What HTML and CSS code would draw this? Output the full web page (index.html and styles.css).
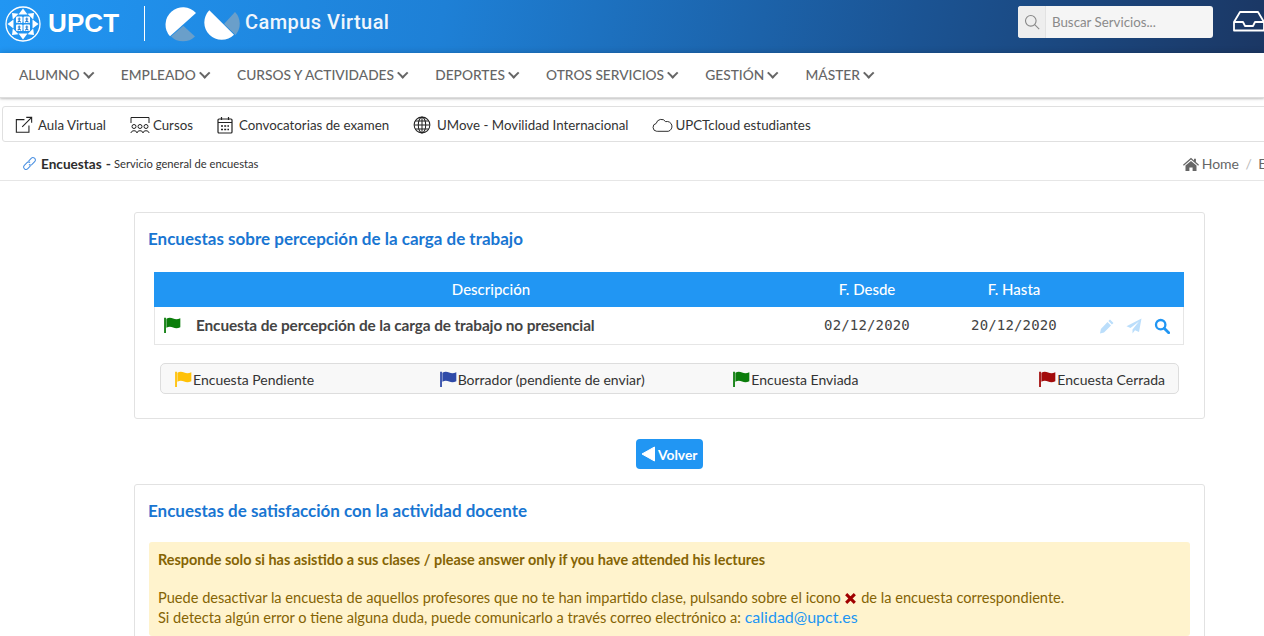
FILE: index.html
```html
<!DOCTYPE html>
<html lang="es">
<head>
<meta charset="utf-8">
<title>Campus Virtual UPCT</title>
<link rel="stylesheet" href="styles.css">
</head>
<body>
<svg class="defs" width="0" height="0" aria-hidden="true">
  <symbol id="flag" viewBox="0 0 16 16"><path d="M1 1.500h1.600V15H1z"/><path d="M3 2.400C5 1.200 7 1.300 9 2.200c2 .9 4 .9 6.400-.2v8c-2.400 1.100-4.400 1.100-6.400.2-2-.9-4-1-6 .2z"/></symbol>
</svg>
<header class="topbar">
  <div class="brand">
    <svg class="seal" viewBox="0 0 36 36" fill="none">
      <circle cx="18" cy="18" r="17" stroke="#fff" stroke-width="1.300"/>
      <g fill="#fff">
        <path d="M18 2.500l4.500 6h-9z"/><path d="M18 33.500l4.500-6h-9z"/><path d="M2.500 18l6-4.500v9z"/><path d="M33.500 18l-6-4.500v9z"/>
        <path d="M7 7l6.500.8-5.700 5.700z"/><path d="M29 7l-6.500.8 5.700 5.700z"/><path d="M7 29l6.500-.8-5.700-5.700z"/><path d="M29 29l-6.500-.8 5.700-5.700z"/>
        <rect x="11" y="10.500" width="6.500" height="6.500" rx="1"/><rect x="18.500" y="10.500" width="6.500" height="6.500" rx="1"/><rect x="11" y="18.500" width="6.500" height="6.500" rx="1"/><rect x="18.500" y="18.500" width="6.500" height="6.500" rx="1"/>
      </g>
      <g stroke="#2a7fd0" stroke-width="1.100">
        <path d="M14.200 11.500v3l-1.500 1.800M14.200 14.500l1.600 1.800M12.800 13h2.800"/>
        <path d="M21.800 11.500v3l-1.500 1.800M21.800 14.500l1.600 1.800M20.400 13h2.800"/>
        <path d="M14.200 19.500v3l-1.500 1.800M14.200 22.500l1.600 1.800M12.800 21h2.800"/>
        <path d="M21.800 19.500v3l-1.500 1.800M21.800 22.500l1.600 1.800M20.400 21h2.800"/>
      </g>
    </svg>
    <span class="upct">UPCT</span>
    <span class="divider"></span>
    <svg class="pie" viewBox="0 0 85 42">
      <path fill="#fff" d="M36 10A17.300 17.300 0 1 0 10 33.300z"/>
      <path fill="#6a9fca" d="M11 33.500L23.300 22.700 35 33.500A17.300 17.300 0 0 1 11 33.500z"/>
      <path fill="#fff" d="M49.300 7.300A17 17 0 1 0 74 31.700z"/>
      <path fill="#6a9fca" d="M64 21L75 9a17 17 0 0 1 .500 23z"/>
    </svg>
    <span class="campus">Campus Virtual</span>
  </div>
  <div class="tools">
    <div class="search">
      <span class="search-addon">
        <svg viewBox="0 0 16 16" width="16" height="16" fill="none" stroke="#888" stroke-width="1.100"><circle cx="6.800" cy="6.800" r="5.300"/><path d="M10.700 10.700l4.500 4.500"/></svg>
      </span>
      <span class="search-input">Buscar Servicios...</span>
    </div>
    <svg class="inbox" viewBox="0 0 32 22" fill="none" stroke="#fff" stroke-width="1.800" stroke-linejoin="round"><path d="M1 12L7 2h18l6 10v8.500H1z"/><path d="M1 12h9l2 4h8l2-4h9"/></svg>
  </div>
</header>

<nav class="mainnav">
  <a>ALUMNO <i class="caret"></i></a>
  <a>EMPLEADO <i class="caret"></i></a>
  <a>CURSOS Y ACTIVIDADES <i class="caret"></i></a>
  <a>DEPORTES <i class="caret"></i></a>
  <a>OTROS SERVICIOS <i class="caret"></i></a>
  <a>GESTIÓN <i class="caret"></i></a>
  <a>MÁSTER <i class="caret"></i></a>
</nav>

<div class="quick">
  <a class="q"><svg class="qi" viewBox="0 0 20 20" fill="none" stroke="#222" stroke-width="1.200"><path d="M15.500 10.500v7.500H1.500V4h9"/><path d="M8 12L18.500 1.500M12.500 1.500h6v6"/></svg>Aula Virtual</a>
  <a class="q"><svg class="qi wide" viewBox="0 0 20 18" fill="none" stroke="#222" stroke-width="1"><path d="M1 7V1.500h18V7"/><circle cx="4" cy="10.500" r="2"/><circle cx="10" cy="10.500" r="2"/><circle cx="16" cy="10.500" r="2"/><path d="M1 17c0-3 6-3 6 0M7 17c0-3 6-3 6 0M13 17c0-3 6-3 6 0"/></svg>Cursos</a>
  <a class="q"><svg class="qi cal" viewBox="0 0 16 18" fill="none" stroke="#222" stroke-width="1.200"><rect x="1" y="3" width="14" height="14" rx="1"/><path d="M1 6.500h14M4.500 1v3M11.500 1v3"/><path stroke-width="1.600" stroke-dasharray="2 1.200" d="M4 10h8M4 13.500h8"/></svg>Convocatorias de examen</a>
  <a class="q"><svg class="qi globe" viewBox="0 0 16 16" fill="none" stroke="#222" stroke-width=".9"><circle cx="8" cy="8" r="7"/><ellipse cx="8" cy="8" rx="3.300" ry="7"/><path d="M8 1v14M1 8h14M2 4.500h12M2 11.500h12"/></svg>UMove - Movilidad Internacional</a>
  <a class="q"><svg class="qi cloud" viewBox="0 0 20 14" fill="none" stroke="#222" stroke-width=".9"><path d="M5 13H4.500a3.800 3.800 0 0 1-.5-7.500A5 5 0 0 1 13 3.800 4.500 4.500 0 0 1 15.500 13z"/></svg>UPCTcloud estudiantes</a>
</div>

<div class="crumbs">
  <div class="crumb-title">
    <svg class="link" viewBox="0 0 16 16" fill="none" stroke="#4a90e2" stroke-width="1.100"><path d="M7 5.500l2.800-3a2.500 2.500 0 0 1 3.700 3.400l-2.800 3a2.500 2.500 0 0 1-3.300.2"/><path d="M9 10.500l-2.800 3a2.500 2.500 0 0 1-3.700-3.400l2.800-3a2.500 2.500 0 0 1 3.300-.2"/></svg>
    <strong>Encuestas</strong><b class="dash">-</b><small>Servicio general de encuestas</small>
  </div>
  <div class="crumb-path">
    <svg class="home" viewBox="0 0 16 14"><path fill="#666" d="M8 .8l3 2.600V1.800h1.900v3.300L16 7.800l-.8.900L8 2.500.8 8.700 0 7.800z"/><path fill="#666" d="M8 4l5.500 4.600V14H9.600v-3.600H6.400V14H2.500V8.600z"/></svg>
    <span>Home</span><span class="sep">/</span><span>Encuestas</span>
  </div>
</div>

<main class="content">
  <section class="card first">
    <h2>Encuestas sobre percepción de la carga de trabajo</h2>
    <table class="grid">
      <thead>
        <tr><th class="c-flag"></th><th class="c-desc">Descripción</th><th class="c-from">F. Desde</th><th class="c-to">F. Hasta</th><th class="c-act"></th></tr>
      </thead>
      <tbody>
        <tr>
          <td class="flagcell"><svg class="flag green"><use href="#flag"/></svg></td>
          <td class="name">Encuesta de percepción de la carga de trabajo no presencial</td>
          <td class="date">02/12/2020</td>
          <td class="date">20/12/2020</td>
          <td class="actions">
            <svg viewBox="0 0 16 16" class="pale"><path d="M11 1.500l3.500 3.500-1.600 1.600-3.500-3.500zM8.500 4l3.500 3.500L5 14.500l-4 1 .9-4.500z"/></svg>
            <svg viewBox="0 0 16 16" class="pale"><path d="M15.500.5L13 14l-4-1.800-2.500 3.300v-4L13 3.500 4.500 10 .5 8.200z"/></svg>
            <svg viewBox="0 0 16 16" class="lens" fill="none"><circle cx="6.700" cy="6.700" r="4.700" stroke-width="2.300"/><path d="M10.200 10.200l4.500 4.500" stroke-width="2.800" stroke-linecap="round"/></svg>
          </td>
        </tr>
      </tbody>
    </table>
    <div class="legend">
      <span class="l1"><svg class="flag yellow"><use href="#flag"/></svg>Encuesta Pendiente</span>
      <span class="l2"><svg class="flag navy"><use href="#flag"/></svg>Borrador (pendiente de enviar)</span>
      <span class="l3"><svg class="flag green"><use href="#flag"/></svg>Encuesta Enviada</span>
      <span class="l4"><svg class="flag red"><use href="#flag"/></svg>Encuesta Cerrada</span>
    </div>
  </section>

  <div class="back">
    <a class="btn"><svg viewBox="0 0 14 16" width="14" height="16"><path fill="#fff" d="M13.500 1v14L1 8z" stroke="#fff" stroke-linejoin="round"/></svg>Volver</a>
  </div>

  <section class="card second">
    <h2>Encuestas de satisfacción con la actividad docente</h2>
    <div class="alert">
      <p class="strong">Responde solo si has asistido a sus clases / please answer only if you have attended his lectures</p>
      <p>Puede desactivar la encuesta de aquellos profesores que no te han impartido clase, pulsando sobre el icono <svg class="times" viewBox="0 0 12 12"><path d="M2 2l8 8M10 2l-8 8" stroke="#a00000" stroke-width="2.800"/></svg> de la encuesta correspondiente.<br>Si detecta algún error o tiene alguna duda, puede comunicarlo a través correo electrónico a: <a class="mail">calidad@upct.es</a></p>
    </div>
  </section>
</main>
</body>
</html>
```
FILE: styles.css
```css
html { overflow: hidden; height: 100%; }
body { margin: 0; height: 636px; overflow: hidden; background: #fff; color: #333; font-family: Lato, "Noto Sans", sans-serif; font-size: 14px; }
.defs { position: absolute; }

.topbar { height: 53px; display: flex; justify-content: space-between; align-items: center; background: linear-gradient(100deg, #2196f3 0%, #1e80d6 35%, #1b5494 72%, #1b3764 100%); color: #fff; }
.brand { display: flex; align-items: center; padding: 0 0 6px 5px; }
.seal { width: 36px; height: 36px; }
.upct { font: 700 26px "Liberation Sans", Arial, sans-serif; margin-left: 7px; width: 72px; letter-spacing: .1px; }
.divider { width: 1px; height: 35px; background: #fff; margin-left: 24px; }
.pie { width: 85px; height: 42px; margin-left: 15px; }
.campus { font: 500 20px Roboto, sans-serif; letter-spacing: .45px; color: #f0f6fc; margin-bottom: 3px; }
.tools { display: flex; align-items: center; gap: 20px; margin-right: -1px; }
.search { display: flex; width: 195px; height: 32px; border-radius: 3px; overflow: hidden; background: #f5f5f5; margin-bottom: 9px; }
.search-addon { width: 27px; display: flex; align-items: center; justify-content: center; background: #eee; border-right: 1px solid #e2e2e2; }
.search-input { padding-left: 6px; line-height: 32px; font-size: 13.300px; color: #8a8a8a; }
.inbox { width: 32px; height: 22px; margin-bottom: 11px; }

.mainnav { height: 45px; box-sizing: border-box; display: flex; align-items: center; padding: 0 0 1px 19px; gap: 27.700px; box-shadow: 0 1px 2px rgba(0,0,0,.2), 0 -1px 6px rgba(0,0,0,.15); border-bottom: 1px solid #ddd; position: relative; color: #666; font-size: 13.750px; font-weight: 500; }
.mainnav a { display: flex; align-items: center; gap: 4px; white-space: nowrap; }
.caret { width: 5.500px; height: 5.500px; border: solid #666; border-width: 0 2.500px 2.500px 0; transform: rotate(45deg); margin: 0 1px 3px; }

.quick { width: 1290px; height: 36px; box-sizing: border-box; margin: 8px 0 0 2px; padding: 1px 0 0 12px; gap: 24px; display: flex; align-items: center; border: 1px solid #e0e0e0; border-radius: 3px; font-size: 13.300px; color: #333; }
.q { display: flex; align-items: center; white-space: nowrap; }
.qi { width: 18px; height: 18px; margin-right: 5px; flex: none; }
.qi.wide { width: 20px; margin-right: 3px; }
.qi.cal { width: 16px; margin-right: 6px; }
.qi.globe { margin-right: 6px; }
.qi.cloud { width: 21px; height: 16px; margin-right: 2px; }

.crumbs { width: 1320px; height: 39px; box-sizing: border-box; padding-top: 5px; display: flex; justify-content: space-between; align-items: center; border-bottom: 1px solid #e6e6e6; }
.crumb-title { display: flex; align-items: center; padding-left: 22px; }
.link { width: 15px; height: 15px; margin-right: 4px; }
.crumb-title strong { font-size: 13.600px; color: #2d2d2d; }
.dash { margin: 0 3px 0 4px; }
.crumb-title small { font-size: 11.200px; color: #333; }
.crumb-path { display: flex; align-items: center; color: #666; font-size: 14px; }
.home { width: 16px; height: 14px; margin-right: 3px; }
.sep { color: #bbb; margin: 0 6.500px; }

.content { width: 1071px; margin-left: 134px; padding-top: 31px; }
.card { border: 1px solid #e2e2e2; border-radius: 3px; box-sizing: border-box; }
.card h2 { margin: 0; color: #1976d2; font-size: 17px; font-weight: 700; line-height: 24px; padding: 14px 13px 0; }
.card.first { height: 207px; }

.grid { border-collapse: separate; border-spacing: 0; table-layout: fixed; width: 1030px; margin: 21px 0 0 19px; }
.grid th { background: #2196f3; color: #fff; font-size: 15px; font-weight: 500; height: 35px; padding: 0 0 2px; box-sizing: border-box; text-align: center; }
.c-flag { width: 34px; }
.c-desc { width: 606px; }
.c-from { width: 146px; }
.c-to { width: 148px; }
.c-act { width: 96px; }
.grid td { height: 38px; padding: 0 0 1px; box-sizing: border-box; border-bottom: 1px solid #e6e6e6; }
.grid td:first-child { border-left: 1px solid #e6e6e6; }
.grid td:last-child { border-right: 1px solid #e6e6e6; }
.flagcell { padding-left: 8px !important; }
.name { font-size: 15.400px; font-weight: 700; color: #444; padding-left: 8px !important; letter-spacing: -.12px; }
.date { font: 14px "DejaVu Sans Mono", monospace; letter-spacing: .15px; text-align: center; color: #444; }
.actions { text-align: right; white-space: nowrap; padding-right: 13px !important; }
.actions svg { width: 16px; height: 16px; margin-left: 8px; vertical-align: middle; }
.pale { fill: #bbdefb; }
.lens { stroke: #2196f3; }

.flag { width: 18px; height: 18px; vertical-align: -3px; margin-right: 1px; }
.flag.green { fill: #0b7d0b; }
.flag.yellow { fill: #ffc107; }
.flag.navy { fill: #2f4aa8; }
.flag.red { fill: #a30b0b; }
.flagcell .flag { display: block; }

.legend { width: 1019px; box-sizing: border-box; height: 31px; margin: 18px 0 0 25px; padding: 1px 13px 0; display: grid; grid-template-columns: repeat(4, 1fr); align-items: center; background: #f8f8f8; border: 1px solid #ddd; border-radius: 5px; font-size: 14px; color: #333; }
.legend span { white-space: nowrap; }
.l2 { text-align: center; padding-right: 8px; }
.l3 { text-align: center; padding-left: 4px; }
.l4 { text-align: right; }

.back { display: flex; justify-content: center; padding: 20px 0 15px; }
.btn { display: flex; align-items: center; gap: 3px; height: 30px; width: 67px; box-sizing: border-box; padding-left: 5px; background: #2196f3; color: #fff; border-radius: 4px; font-size: 13.800px; font-weight: 700; }

.card.second { height: 180px; }
.alert { margin: 19px 14px 0; background: #fff3cd; border-radius: 3px; color: #856404; font-size: 14.600px; line-height: 20px; padding: 8px 9px; }
.alert p { margin: 0; }
.alert .strong { font-size: 14.450px; font-weight: 700; margin-bottom: 18px; }
.times { width: 13px; height: 13px; vertical-align: -2px; }
.mail { color: #2196f3; font-size: 16px; line-height: 1; }
```
